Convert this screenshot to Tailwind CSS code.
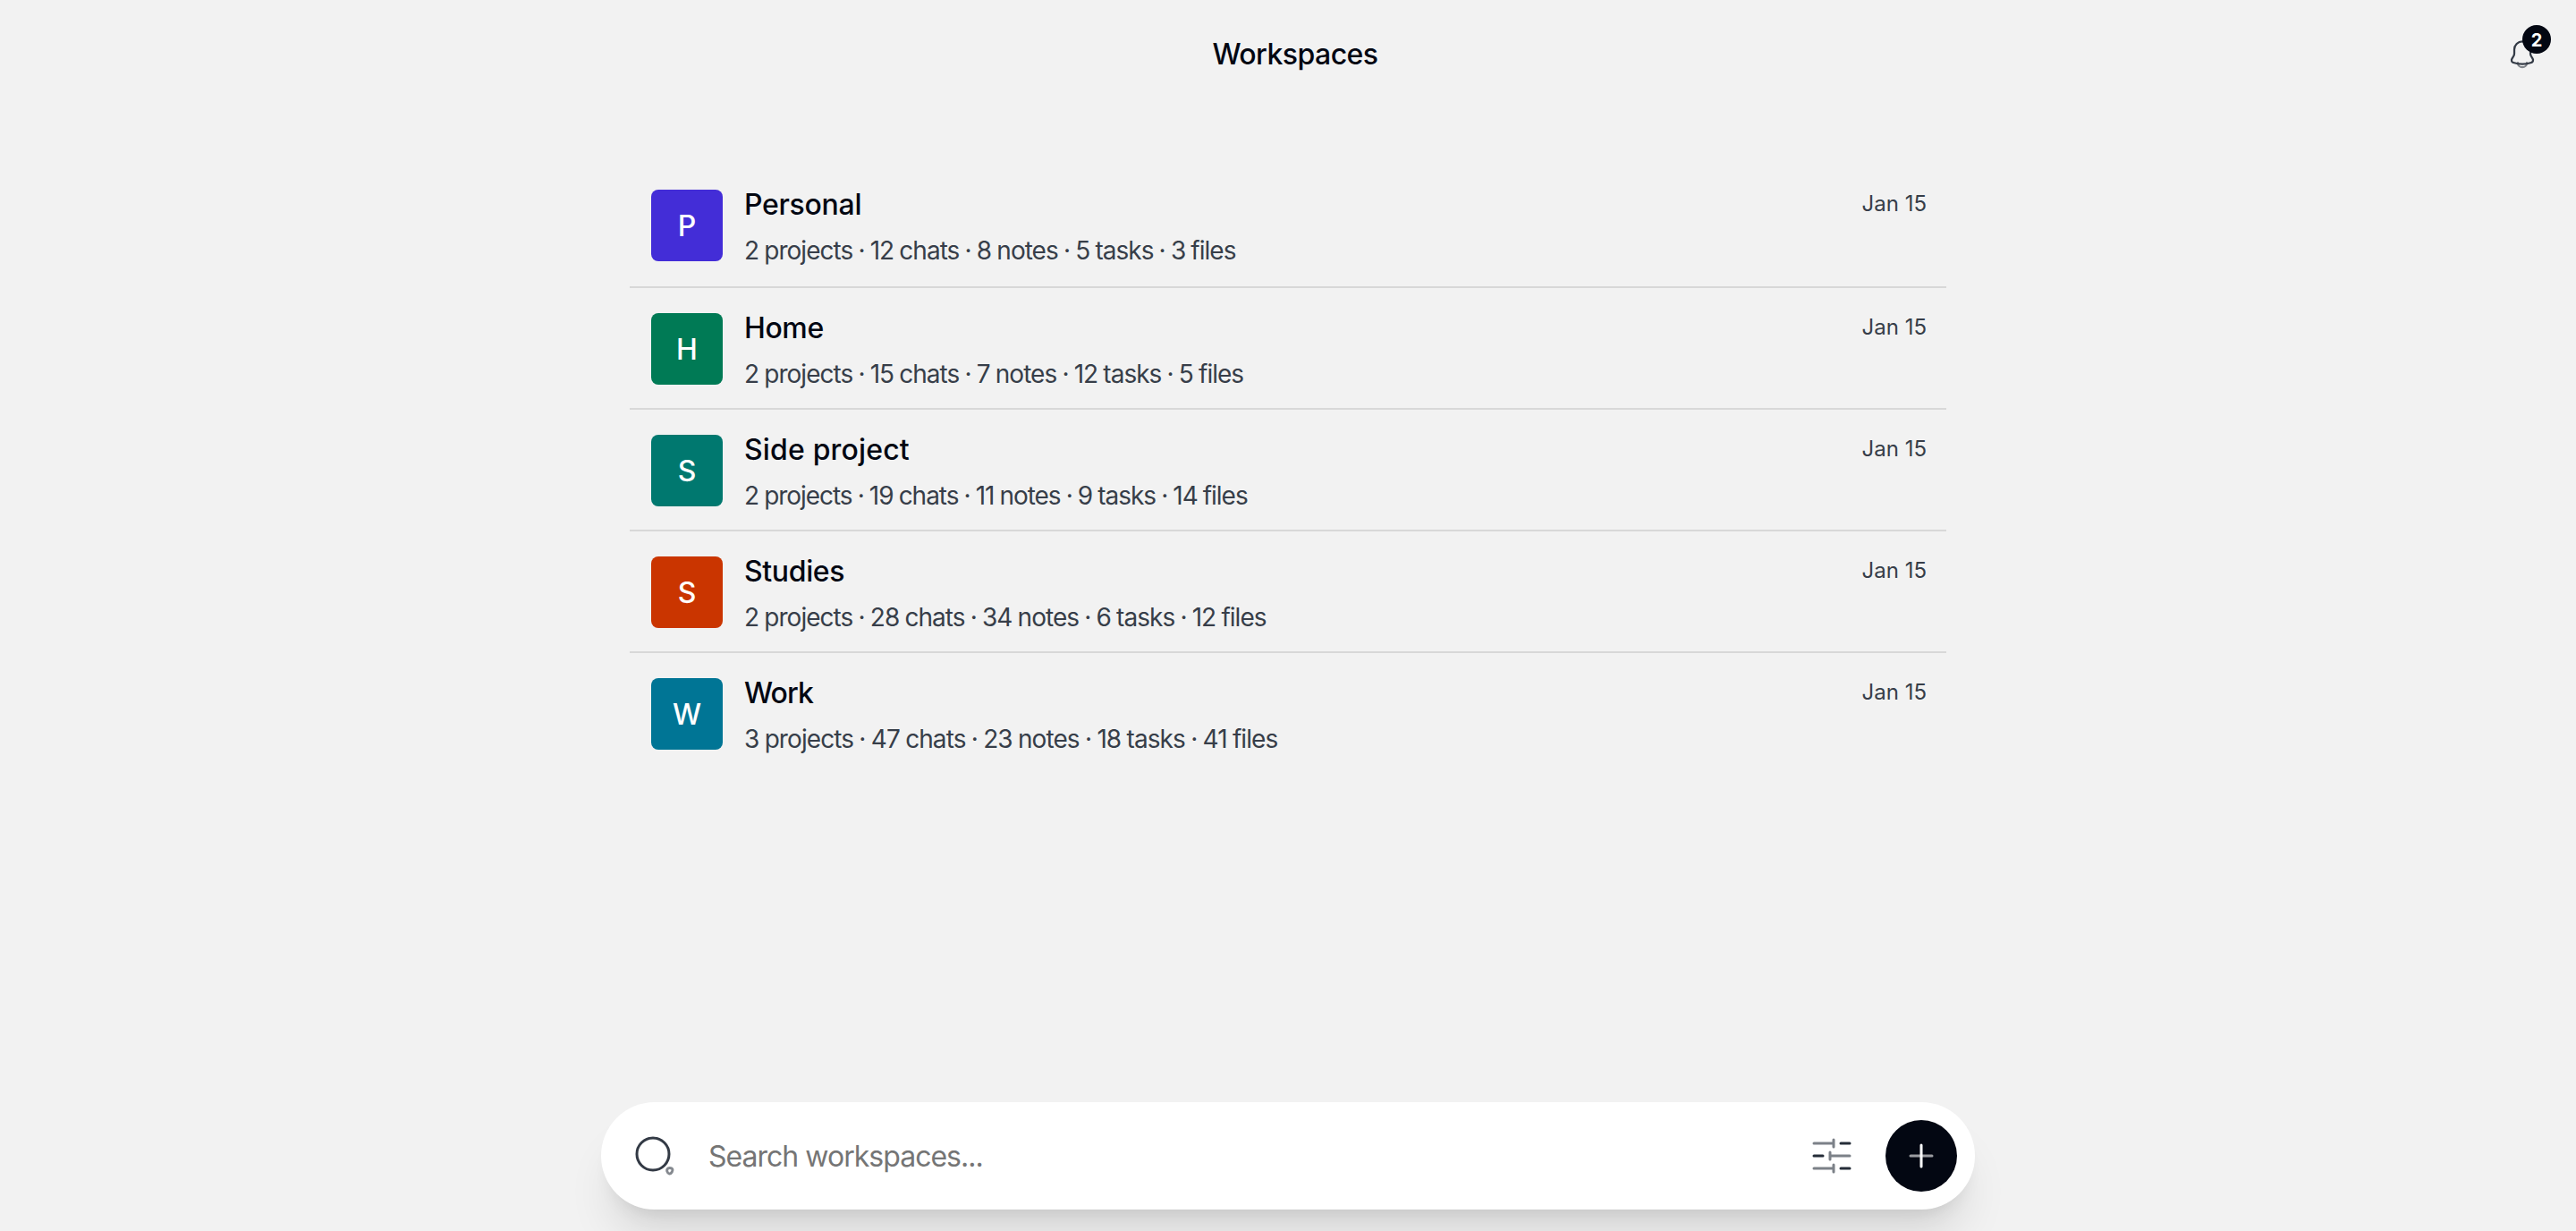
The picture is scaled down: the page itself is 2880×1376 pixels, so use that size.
<!DOCTYPE html>
<html lang="en">
<head>
    <meta charset="UTF-8">
    <title>Workspaces</title>
    <script src="https://cdn.jsdelivr.net/npm/@tailwindcss/browser@4"></script>
</head>
<body class="h-screen overflow-hidden bg-[#f2f2f2]">
<!-- Whole app is laid out at 1440x688 and doubled -->
<div class="flex h-[688px] w-[1440px] origin-top-left scale-200 flex-col font-['Inter',sans-serif] text-[#030712]">
    <!-- Header -->
    <header class="grid h-[60px] shrink-0 grid-cols-3 items-center px-4">
        <div></div>
        <h1 class="pl-2 text-center text-base font-medium tracking-[-0.27px]">Workspaces</h1>
        <button class="relative mr-[5px] size-[18px] justify-self-end" aria-label="Notifications">
            <svg class="size-[18px]" viewBox="0 0 24 24" fill="none" stroke="#333a45" stroke-width="1.5" stroke-linecap="round">
                <path d="M12.020 2.910c-3.310 0-6 2.690-6 6v2.890c0 .61-.26 1.540-.57 2.060L4.300 15.770c-.71 1.180-.22 2.490 1.080 2.930 4.310 1.440 8.960 1.440 13.270 0 1.210-.4 1.740-1.830 1.080-2.930l-1.150-1.910c-.3-.52-.56-1.450-.56-2.060V8.910c0-3.300-2.700-6-6-6Z"/>
                <path opacity=".6" d="M15.330 18.820c0 1.830-1.500 3.330-3.330 3.330s-3.330-1.500-3.330-3.330"/>
            </svg>
            <span class="absolute -top-[7px] left-[9px] flex size-4 items-center justify-center rounded-full bg-[#030712] text-[10px] font-bold text-white">2</span>
        </button>
    </header>

    <!-- Workspace list -->
    <main class="mx-auto mt-8 w-[736px] flex-1">
        <ul>
            <li class="flex h-[69px] gap-3 border-b border-[#d8d8d8] px-3 pt-3.5">
                <div class="flex size-10 items-center justify-center rounded bg-[#432dd7] text-base font-medium text-white">P</div>
                <div class="-mt-1 flex-1">
                    <h2 class="text-base font-medium leading-6 tracking-[-0.15px]">Personal</h2>
                    <p class="mt-0.5 text-sm leading-6 tracking-[-0.49px] [word-spacing:-0.36px] text-[#373e49]">2 projects · 12 chats · 8 notes · 5 tasks · 3 files</p>
                </div>
                <time class="-mr-px text-xs leading-4 text-[#373e49]">Jan 15</time>
            </li>
            <li class="flex h-[68px] gap-3 border-b border-[#d8d8d8] px-3 pt-3.5">
                <div class="flex size-10 items-center justify-center rounded bg-[#007a55] text-base font-medium text-white">H</div>
                <div class="-mt-1 flex-1">
                    <h2 class="text-base font-medium leading-6 tracking-[-0.2px]">Home</h2>
                    <p class="mt-0.5 text-sm leading-6 tracking-[-0.49px] [word-spacing:-0.36px] text-[#373e49]">2 projects · 15 chats · 7 notes · 12 tasks · 5 files</p>
                </div>
                <time class="-mr-px text-xs leading-4 text-[#373e49]">Jan 15</time>
            </li>
            <li class="flex h-[68px] gap-3 border-b border-[#d8d8d8] px-3 pt-3.5">
                <div class="flex size-10 items-center justify-center rounded bg-[#00786f] text-base font-medium text-white">S</div>
                <div class="-mt-1 flex-1">
                    <h2 class="text-base font-medium leading-6 tracking-[0.08px]">Side project</h2>
                    <p class="mt-0.5 text-sm leading-6 tracking-[-0.52px] [word-spacing:-0.36px] text-[#373e49]">2 projects · 19 chats · 11 notes · 9 tasks · 14 files</p>
                </div>
                <time class="-mr-px text-xs leading-4 text-[#373e49]">Jan 15</time>
            </li>
            <li class="flex h-[68px] gap-3 border-b border-[#d8d8d8] px-3 pt-3.5">
                <div class="flex size-10 items-center justify-center rounded bg-[#ca3500] text-base font-medium text-white">S</div>
                <div class="-mt-1 flex-1">
                    <h2 class="text-base font-medium leading-6 tracking-[-0.18px]">Studies</h2>
                    <p class="mt-0.5 text-sm leading-6 tracking-[-0.485px] [word-spacing:-0.36px] text-[#373e49]">2 projects · 28 chats · 34 notes · 6 tasks · 12 files</p>
                </div>
                <time class="-mr-px text-xs leading-4 text-[#373e49]">Jan 15</time>
            </li>
            <li class="flex h-[68px] gap-3 px-3 pt-3.5">
                <div class="flex size-10 items-center justify-center rounded bg-[#007595] text-base font-medium text-white">W</div>
                <div class="-mt-1 flex-1">
                    <h2 class="text-base font-medium leading-6 tracking-[-0.45px]">Work</h2>
                    <p class="mt-0.5 text-sm leading-6 tracking-[-0.455px] [word-spacing:-0.36px] text-[#373e49]">3 projects · 47 chats · 23 notes · 18 tasks · 41 files</p>
                </div>
                <time class="-mr-px text-xs leading-4 text-[#373e49]">Jan 15</time>
            </li>
        </ul>
    </main>

    <!-- Search bar -->
    <div class="mx-auto mb-3 flex h-[60px] w-[768px] shrink-0 items-center rounded-full bg-white pl-[18px] pr-2.5 shadow-xl">
        <svg class="size-6" viewBox="0 0 24 24" fill="none" stroke="#333a45" stroke-width="1.5">
            <circle cx="11" cy="11" r="9"/>
            <path opacity=".6" d="M18.930 20.690c.53 1.600 1.740 1.760 2.670.36.850-1.280.29-2.330-1.250-2.330-1.140-.01-1.780.88-1.420 1.970Z"/>
        </svg>
        <input type="text" placeholder="Search workspaces..." class="ml-[18px] flex-1 text-base tracking-[-0.49px] outline-none placeholder:text-[#757575]">
        <svg class="size-6" viewBox="0 0 24 24" fill="none" stroke="#252d38" stroke-width="1.5" stroke-linecap="round">
            <path d="M17 5h5M2 12h5M17 19h5"/>
            <path opacity=".6" d="M2 5h11M13 3v4M22 12H11M11 10v4M2 19h11M13 17v4"/>
        </svg>
        <button class="ml-[18px] flex size-10 items-center justify-center rounded-full bg-[#030712]" aria-label="New workspace">
            <svg class="size-6" viewBox="0 0 24 24" fill="none" stroke="#fff" stroke-width="1.5" stroke-linecap="round">
                <path opacity=".6" d="M6 12h12"/>
                <path d="M12 6v12"/>
            </svg>
        </button>
    </div>
</div>
</body>
</html>
